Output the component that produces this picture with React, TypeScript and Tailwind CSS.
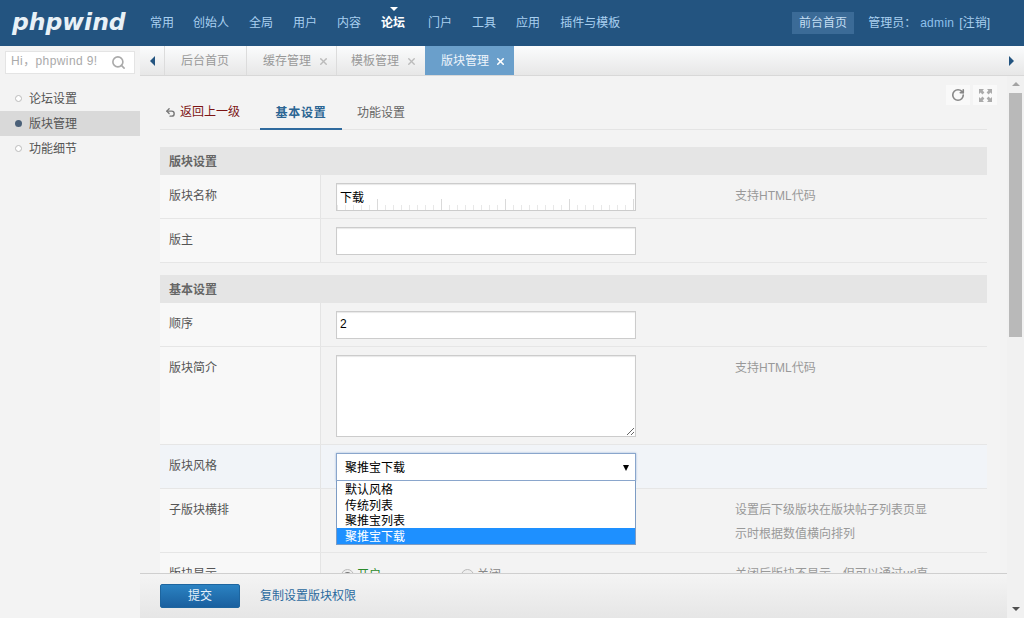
import { ReactNode } from "react";
import { RotateCw, Search, Undo2, X } from "lucide-react";

const navItems = ["常用", "创始人", "全局", "用户", "内容", "论坛", "门户", "工具", "应用", "插件与模板"];
const menuItems = ["论坛设置", "版块管理", "功能细节"];
const styleOptions = ["默认风格", "传统列表", "聚推宝列表", "聚推宝下载"];
const rulerTicks = Array.from({ length: 38 }, (_, i) => i);

function SectionTitle({ children }: { children: ReactNode }) {
  return (
    <div className="h-7 bg-[#e5e5e5] pl-[9px] text-[12px] leading-[31px] font-bold text-[#666]">{children}</div>
  );
}

function FormRow({
  label,
  hint,
  height,
  active,
  children,
}: {
  label: string;
  hint?: ReactNode;
  height: string;
  active?: boolean;
  children?: ReactNode;
}) {
  return (
    <div className={`flex border-b border-[#e6e6e6] ${height} ${active ? "bg-[#f1f4f8]" : "bg-[#f3f3f3]"}`}>
      <div
        className={`w-[161px] shrink-0 border-r border-[#e4e4e4] pl-[9px] pt-[9px] leading-6 text-[#555] ${active ? "" : "bg-[#f8f8f8]"}`}
      >
        {label}
      </div>
      <div className="relative w-[414px] shrink-0 pl-[15px] pt-2">{children}</div>
      <div className="pt-[9px] leading-6 text-[#999]">{hint}</div>
    </div>
  );
}

function TextInput({ value }: { value?: string }) {
  return (
    <input
      readOnly
      value={value ?? ""}
      className="block h-7 w-[300px] border border-[#ccc] bg-white px-[3px] pb-[2px] text-[12px] text-black shadow-[inset_0_1px_1px_#e8e8e8] outline-none"
    />
  );
}

function Radio({ checked }: { checked?: boolean }) {
  return (
    <span className="flex h-[13px] w-[13px] items-center justify-center rounded-full border border-[#bbb] bg-[#eee]">
      {checked && <span className="h-[7px] w-[7px] rounded-full bg-[#777]" />}
    </span>
  );
}

export default function App() {
  return (
    <div className="flex h-[618px] w-[1024px] flex-col overflow-hidden bg-[#f3f3f3] font-['Liberation_Sans','Noto_Sans_CJK_SC',sans-serif] text-[12px]">
      {/* top bar */}
      <header className="flex h-[46px] shrink-0 items-center bg-[#235480] text-[12px] text-[#a9d0f0]">
        <div className="ml-3 w-[138px] font-['DejaVu_Sans',sans-serif] text-[23.5px] leading-none font-bold text-[#e8f1f7] italic">
          phpwind
        </div>
        <nav className="flex gap-5">
          {navItems.map((item) =>
            item === "论坛" ? (
              <span key={item} className="relative w-[27px] font-bold text-white">
                {item}
                <span className="absolute -top-[7px] left-[9px] h-0 w-0 border-x-[4px] border-t-[4px] border-x-transparent border-t-white" />
              </span>
            ) : (
              <span key={item} className={item === "常用" ? "-mr-px" : ""}>
                {item}
              </span>
            ),
          )}
        </nav>
        <div className="ml-auto flex items-center pr-[34px]">
          <span className="flex h-[22px] w-[62px] items-center justify-center bg-[#3b6b97] text-[#c4def3]">前台首页</span>
          <span className="ml-[14px]">管理员：</span>
          <span className="ml-1 tracking-[0.3px] text-[#8fc0ec]">admin</span>
          <span className="ml-[5px]">[注销]</span>
        </div>
      </header>

      <div className="flex min-h-0 flex-1">
        {/* side menu */}
        <aside className="w-[140px] shrink-0 bg-[#f3f3f3]">
          <div className="relative mx-[5px] mt-[5px] h-[23px] border border-[#e4e4e4] bg-white pl-[5px] leading-[19px] text-[#aaa]">
            <span className="block w-[87px] overflow-hidden tracking-[0.4px] whitespace-nowrap">Hi，phpwind 9!</span>
            <Search className="absolute top-[3px] right-[8px] h-[15px] w-[15px] text-[#aaa]" strokeWidth={2.6} />
          </div>
          <ul className="mt-3">
            {menuItems.map((item) => (
              <li
                key={item}
                className={`flex h-[25px] items-center pl-[15px] text-[#555] ${item === "版块管理" ? "bg-[#d9d9d9]" : ""}`}
              >
                <span
                  className={`mr-[7px] h-[7px] w-[7px] rounded-full ${item === "版块管理" ? "bg-[#4a6078]" : "border border-[#bbb] bg-white"}`}
                />
                {item}
              </li>
            ))}
          </ul>
        </aside>

        <div className="flex min-w-0 flex-1 flex-col">
          {/* open tabs */}
          <div className="flex h-[30px] shrink-0 items-stretch border-b border-[#d8d8d8] bg-gradient-to-b from-[#fbfcfd] to-[#e7e7e7] text-[#999]">
            <div className="flex w-[25px] items-center justify-center border-r border-[#dcdcdc]">
              <span className="h-0 w-0 border-y-[5px] border-r-[5px] border-y-transparent border-r-[#235480]" />
            </div>
            <div className="flex w-[82px] items-center border-r border-[#dcdcdc] pt-px pl-4">后台首页</div>
            <div className="flex w-[90px] items-center border-r border-[#dcdcdc] pt-px pl-4">
              缓存管理
              <X className="ml-[7px] h-[11px] w-[11px] text-[#bbb]" strokeWidth={3} />
            </div>
            <div className="flex w-[88px] items-center pt-px pl-[14px]">
              模板管理
              <X className="ml-[7px] h-[11px] w-[11px] text-[#bbb]" strokeWidth={3} />
            </div>
            <div className="flex w-[89px] items-center bg-[#6a9fcb] pt-px pl-4 text-[#eef5fb]">
              版块管理
              <X className="ml-[6px] h-[11px] w-[11px] text-white" strokeWidth={3.5} />
            </div>
            <div className="ml-auto flex w-[26px] items-center justify-center">
              <span className="h-0 w-0 border-y-[5px] border-l-[5px] border-y-transparent border-l-[#235480]" />
            </div>
          </div>

          <div className="flex min-h-0 flex-1">
            <div className="flex min-w-0 flex-1 flex-col">
              <main className="relative min-h-0 flex-1 overflow-hidden px-5">
                {/* reload / fullscreen */}
                <div className="absolute top-[9px] right-[10px] flex gap-[3px]">
                  <span className="flex h-5 w-6 items-center justify-center bg-[#f9f9f9]">
                    <RotateCw className="h-[14px] w-[14px] text-[#888]" strokeWidth={2.8} />
                  </span>
                  <span className="flex h-5 w-6 items-center justify-center bg-[#f9f9f9]">
                    <svg width="13" height="13" viewBox="0 0 13 13" fill="#aaa">
                      <path d="M0 0h5L3.6 1.6 5.4 3.4 3.4 5.4 1.6 3.6 0 5zM13 0v5l-1.6-1.4-1.8 1.8-2-2 1.8-1.8L8 0zM0 13V8l1.6 1.4 1.8-1.8 2 2-1.8 1.8L5 13zM13 13H8l1.4-1.6-1.8-1.8 2-2 1.8 1.8L13 8z" />
                    </svg>
                  </span>
                </div>

                {/* page tabs */}
                <div className="mt-[24px] flex h-[30px] items-start border-b border-[#e4e4e4] leading-6">
                  <a className="flex w-[100px] items-center pl-[5px] text-[#7d1414]">
                    <Undo2 className="mr-[4px] h-[11px] w-[11px] text-[#777]" strokeWidth={3} />
                    返回上一级
                  </a>
                  <a className="h-[30px] w-[82px] border-b-2 border-[#2f6a9e] pt-px text-center font-bold tracking-[0.7px] text-[#2b6593]">基本设置</a>
                  <a className="ml-[15px] pt-px text-[#666]">功能设置</a>
                </div>

                <div className="mt-[17px]">
                  <SectionTitle>版块设置</SectionTitle>
                  <FormRow label="版块名称" height="h-[44px]" hint="支持HTML代码">
                    <div className="relative w-[300px]">
                      <TextInput value="下载" />
                      <svg className="absolute top-[16px] left-[1px]" width="298" height="11">
                        {rulerTicks.map((i) => (
                          <line
                            key={i}
                            x1={8 * i + 0.5}
                            x2={8 * i + 0.5}
                            y1={i % 8 === 5 ? 0 : 6}
                            y2={11}
                            stroke={i % 8 === 5 ? "#dadada" : "#e8e8e8"}
                          />
                        ))}
                      </svg>
                    </div>
                  </FormRow>
                  <FormRow label="版主" height="h-[44px]">
                    <TextInput />
                  </FormRow>
                </div>

                <div className="mt-3">
                  <SectionTitle>基本设置</SectionTitle>
                  <FormRow label="顺序" height="h-[44px]">
                    <TextInput value="2" />
                  </FormRow>
                  <FormRow label="版块简介" height="h-[98px]" hint="支持HTML代码">
                    <textarea
                      readOnly
                      className="block h-[82px] w-[300px] resize border border-[#ccc] bg-white shadow-[inset_0_1px_1px_#e8e8e8] outline-none"
                    />
                  </FormRow>
                  <FormRow label="版块风格" height="h-[44px]" active>
                    <div className="flex h-7 w-[300px] items-center justify-between border border-[#8aa6cc] bg-white pt-[2px] pr-[6px] pl-2 text-black shadow-[0_0_2px_#9db8d8]">
                      聚推宝下载
                      <span className="h-0 w-0 border-x-[3.5px] border-t-[6px] border-x-transparent border-t-black" />
                    </div>
                    {/* open select list */}
                    <ul className="absolute top-9 left-[15px] z-10 h-[64px] w-[300px] border-x border-b border-[#7d9cc4] bg-white text-black">
                      {styleOptions.map((option) => (
                        <li
                          key={option}
                          className={`h-[15.67px] pl-2 leading-[18px] ${option === "聚推宝下载" ? "h-[16px] bg-[#1e90ff] text-white" : ""}`}
                        >
                          {option}
                        </li>
                      ))}
                    </ul>
                  </FormRow>
                  <FormRow
                    label="子版块横排"
                    height="h-[64px]"
                    hint={
                      <>
                        设置后下级版块在版块帖子列表页显
                        <br />
                        示时根据数值横向排列
                      </>
                    }
                  />
                  <FormRow label="版块显示" height="h-[44px]" hint="关闭后版块不显示，但可以通过url直">
                    <div className="mt-[5px] flex items-center">
                      <span className="ml-[5px]"><Radio checked /></span>
                      <span className="ml-[3px] w-[104px] text-[#2b8a2b]">开启</span>
                      <Radio />
                      <span className="ml-[3px] text-[#888]">关闭</span>
                    </div>
                  </FormRow>
                </div>
              </main>

              {/* submit bar */}
              <footer className="flex h-[45px] shrink-0 items-center border-t border-[#cfcfcf] bg-gradient-to-b from-[#f4f4f4] to-[#e6e6e6] pl-5">
                <button className="h-6 w-20 rounded-[2px] border border-[#1d659f] bg-gradient-to-b from-[#2b82c2] to-[#1a609f] text-[12px] text-[#e6f1fa]">
                  提交
                </button>
                <a className="ml-5 text-[#2b6a9e]">复制设置版块权限</a>
              </footer>
            </div>

            {/* scrollbar */}
            <div className="flex w-[17px] shrink-0 flex-col items-center bg-[#f1f1f1] pt-[6px] pb-[7px]">
              <span className="h-0 w-0 border-x-[4px] border-b-[4px] border-x-transparent border-b-[#a3a3a3]" />
              <span className="mt-[7px] h-[244px] w-[13px] bg-[#b9b9b9]" />
              <span className="mt-auto h-0 w-0 border-x-[4px] border-t-[4px] border-x-transparent border-t-[#505050]" />
            </div>
          </div>
        </div>
      </div>
    </div>
  );
}
